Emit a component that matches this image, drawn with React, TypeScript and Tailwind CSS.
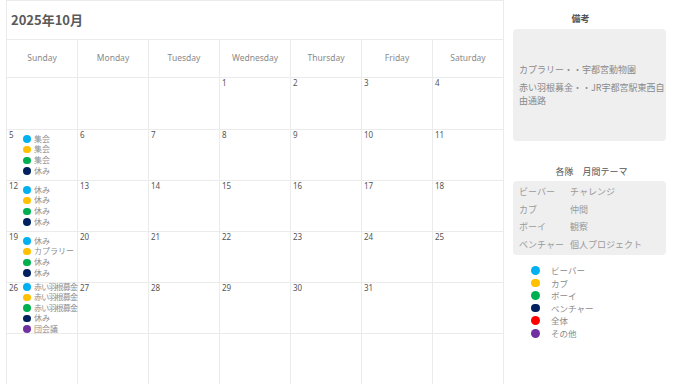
import React from "react";

type Ev = { c: string; t: string };
type Cell = { n?: number; ev?: Ev[] };

const B = "#00b0f0";
const Y = "#ffc000";
const G = "#00b050";
const N = "#002060";
const R = "#ff0000";
const P = "#7030a0";

const weeks: Cell[][] = [
  [{}, {}, {}, { n: 1 }, { n: 2 }, { n: 3 }, { n: 4 }],
  [
    { n: 5, ev: [{ c: B, t: "集会" }, { c: Y, t: "集会" }, { c: G, t: "集会" }, { c: N, t: "休み" }] },
    { n: 6 }, { n: 7 }, { n: 8 }, { n: 9 }, { n: 10 }, { n: 11 },
  ],
  [
    { n: 12, ev: [{ c: B, t: "休み" }, { c: Y, t: "休み" }, { c: G, t: "休み" }, { c: N, t: "休み" }] },
    { n: 13 }, { n: 14 }, { n: 15 }, { n: 16 }, { n: 17 }, { n: 18 },
  ],
  [
    { n: 19, ev: [{ c: B, t: "休み" }, { c: Y, t: "カプラリー" }, { c: G, t: "休み" }, { c: N, t: "休み" }] },
    { n: 20 }, { n: 21 }, { n: 22 }, { n: 23 }, { n: 24 }, { n: 25 },
  ],
  [
    {
      n: 26,
      ev: [
        { c: B, t: "赤い羽根募金" },
        { c: Y, t: "赤い羽根募金" },
        { c: G, t: "赤い羽根募金" },
        { c: N, t: "休み" },
        { c: P, t: "団会議" },
      ],
    },
    { n: 27 }, { n: 28 }, { n: 29 }, { n: 30 }, { n: 31 }, {}, {},
  ],
  [{}, {}, {}, {}, {}, {}, {}],
];

const cells = weeks.flat();

const days = ["Sunday", "Monday", "Tuesday", "Wednesday", "Thursday", "Friday", "Saturday"];

const themes: [string, string][] = [
  ["ビーバー", "チャレンジ"],
  ["カブ", "仲間"],
  ["ボーイ", "観察"],
  ["ベンチャー", "個人プロジェクト"],
];

const legend: Ev[] = [
  { c: B, t: "ビーバー" },
  { c: Y, t: "カブ" },
  { c: G, t: "ボーイ" },
  { c: N, t: "ベンチャー" },
  { c: R, t: "全体" },
  { c: P, t: "その他" },
];

export default function App() {
  return (
    <div className="w-[683px] h-[384px] overflow-hidden bg-white flex items-start font-['Noto_Sans','Noto_Sans_CJK_JP',sans-serif]">
      <div className="ml-[6px] w-[498px] shrink-0 flex flex-col border-l border-t border-[#ebebeb]">
        <div className="h-[39px] shrink-0 border-r border-b border-[#ebebeb] flex items-center pl-[4px]">
          <span className="text-[13px] font-bold text-[#5a5a5a] leading-[16px] font-['Noto_Sans_CJK_JP',sans-serif]">
            2025年10月
          </span>
        </div>
        <div className="grid grid-cols-7 grid-rows-[38px_52px_repeat(5,51px)] shrink-0">
          {days.map((d) => (
            <div
              key={d}
              className="border-r border-b border-[#ebebeb] flex items-center justify-center text-[8.5px] text-[#8a8a8a]"
            >
              {d}
            </div>
          ))}
          {cells.map((c, i) => (
            <div
              key={i}
              className="border-r border-b border-[#ebebeb] flex pl-[2px] overflow-visible"
            >
              {c.n !== undefined && (
                <span className="w-[14px] shrink-0 self-start text-[8px] leading-[10.5px] text-[#555]">
                  {c.n}
                </span>
              )}
              {c.ev && (
                <div className="self-center flex flex-col">
                  {c.ev.map((e, j) => (
                    <div key={j} className="h-[10.6px] flex items-center whitespace-nowrap">
                      <span
                        className="w-[7.5px] h-[7.5px] rounded-full mr-[3.5px] shrink-0"
                        style={{ backgroundColor: e.c }}
                      />
                      <span
                        className={`${e.t.length >= 6 ? "tracking-[-0.8px]" : "tracking-normal"} text-[8px] leading-[10.6px] text-[#8e8e8e] font-['Noto_Sans_CJK_JP',sans-serif]`}
                      >
                        {e.t}
                      </span>
                    </div>
                  ))}
                </div>
              )}
            </div>
          ))}
        </div>
      </div>

      <div className="w-[179px] shrink-0 flex flex-col pl-[9px] font-['Noto_Sans_CJK_JP',sans-serif]">
        <div className="mt-[13px] w-[153px] pr-[18px] text-center text-[9px] leading-[12px] text-[#555] font-bold">
          備考
        </div>
        <div className="mt-[4px] w-[153px] h-[112px] rounded-[4px] bg-[#efefef] flex flex-col justify-center pl-[6px] pr-0 gap-[5px] text-[9px] leading-[13px] text-[#8a8a8a]">
          <p>カプラリー・・宇都宮動物園</p>
          <p>赤い羽根募金・・JR宇都宮駅東西自由通路</p>
        </div>

        <div className="mt-[25px] w-[153px] pl-[4px] text-center text-[9px] leading-[12px] text-[#555]">
          各隊　月間テーマ
        </div>
        <div className="mt-[3px] w-[153px] h-[74px] rounded-[4px] bg-[#efefef] py-[2px] px-[6px] text-[9px] leading-[17.5px] text-[#9a9a9a]">
          {themes.map(([a, b]) => (
            <div key={a} className="flex">
              <span className="w-[51px] shrink-0">{a}</span>
              <span>{b}</span>
            </div>
          ))}
        </div>

        <div className="mt-[9px] pl-[18px] flex flex-col">
          {legend.map((l) => (
            <div key={l.t} className="h-[12.6px] flex items-center">
              <span
                className="w-[8.5px] h-[8.5px] rounded-full shrink-0 mr-[11.5px]"
                style={{ backgroundColor: l.c }}
              />
              <span className="text-[8.5px] leading-[12.6px] text-[#8a8a8a]">{l.t}</span>
            </div>
          ))}
        </div>
      </div>
    </div>
  );
}
